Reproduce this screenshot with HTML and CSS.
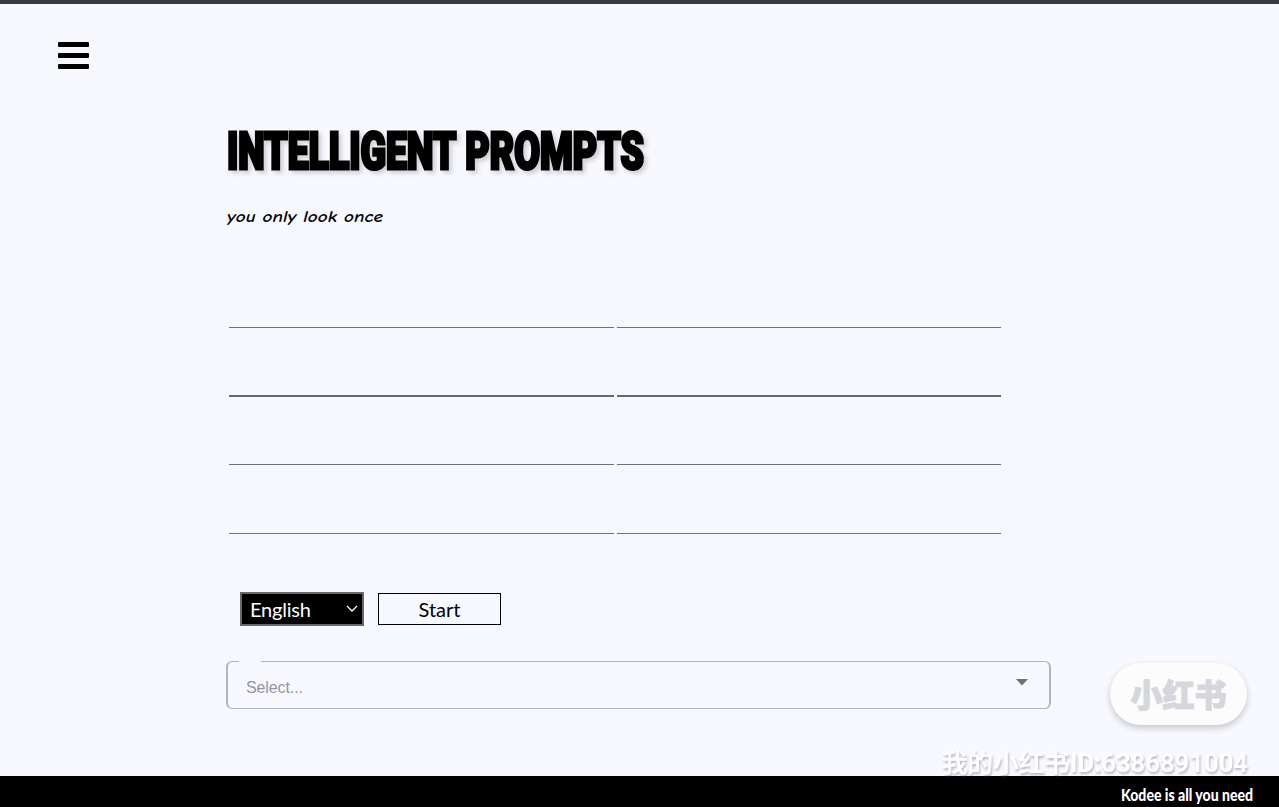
FILE: index.html
```html
<!DOCTYPE html>
<html lang="en">
<head>
<meta charset="utf-8">
<title>Intelligent Prompts</title>
<link rel="stylesheet" href="styles.css">
</head>
<body>
<div class="page">
  <header class="topbar">
    <button class="menu" aria-label="Menu"><span class="bar"></span><span class="bar"></span><span class="bar"></span></button>
  </header>
  <main class="content">
    <h1 class="title"><svg class="title-art" width="440" height="60"><text class="title-text" x="1" y="44.3" textLength="417" lengthAdjust="spacingAndGlyphs">INTELLIGENT PROMPTS</text></svg></h1>
    <p class="tagline"><svg class="tagline-art" width="170" height="30"><text class="tagline-text" x="1" y="18" textLength="156" lengthAdjust="spacingAndGlyphs">you only look once</text></svg></p>
    <div class="fields">
      <span class="field"></span><span class="field"></span>
      <span class="field strong"></span><span class="field strong"></span>
      <span class="field"></span><span class="field"></span>
      <span class="field"></span><span class="field"></span>
    </div>
    <div class="actions">
      <div class="language"><span>English</span><svg width="12" height="8" viewBox="0 0 12 8"><path d="M1 1l5 5 5-5" fill="none" stroke="#fff" stroke-width="1.3"/></svg></div>
      <button class="start">Start</button>
    </div>
    <div class="combo"><span class="placeholder">Select...</span><svg class="caret" width="12" height="7"><path d="M0 0h12l-6 6.5z" fill="#707176"/></svg><span class="notch"></span></div>
  </main>
  <footer class="footer"><svg width="160" height="31"><text class="footer-text" x="2" y="24.5" textLength="132" lengthAdjust="spacingAndGlyphs">Kodee is all you need</text></svg></footer>
  <div class="badge"><span class="badge-text">小红书</span></div>
  <svg class="account" width="320" height="36"><text class="account-text" x="5" y="26" textLength="306" lengthAdjust="spacingAndGlyphs">我的小红书ID:6386891004</text></svg>
</div>
</body>
</html>
```
FILE: styles.css
```css
* { box-sizing: border-box; }
body { margin: 0; background: #f8f9fe; overflow: hidden; }
svg { display: block; }
.page { position: relative; height: 807px; display: flex; flex-direction: column; border-top: 4px solid #3a3a41; overflow: hidden; }
.topbar { height: 121px; padding: 38px 58px 0; }
.menu { display: flex; flex-direction: column; gap: 6px; width: 31px; padding: 0; border: 0; background: none; }
.bar { height: 5px; border-radius: 1px; background: #000; }
.content { flex: 1; padding-left: 226px; }
.title { margin: 0; height: 60px; }
.title-art { overflow: visible; filter: drop-shadow(3px 3px 2px rgba(0,0,0,.16)); }
.title-text { font: 900 51px Roboto, sans-serif; fill: #000; stroke: #000; stroke-width: 3.2px; word-spacing: 1px; }
.tagline { margin: 19px 0 0; height: 30px; }
.tagline-art { overflow: visible; }
.tagline-text { font: italic 600 15.5px "Comic Neue", Lato, sans-serif; fill: #050507; }
.fields { display: grid; grid-template-columns: 385px 384px; grid-auto-rows: 68.7px; column-gap: 3px; padding-left: 3px; height: 300px; margin-top: 25px; }
.field { border-bottom: 1px solid #72737a; }
.field.strong { margin-bottom: -1px; border-bottom-width: 2px; border-color: #68696e; }
.actions { display: flex; align-items: center; gap: 14px; margin: 33px 0 0 14px; height: 34px; font: 20px Lato, sans-serif; }
.language { display: flex; align-items: center; justify-content: space-between; width: 124px; height: 34px; padding: 0 4px 0 8px; border: 2px solid #67686c; background: #000; color: #fff; letter-spacing: -.2px; }
.start { width: 123px; height: 32px; padding: 0; border: 1.5px solid #000; background: transparent; font: 20px Lato, sans-serif; color: #000; }
.combo { position: relative; display: flex; align-items: center; justify-content: space-between; width: 825px; height: 48px; margin-top: 35px; padding: 6px 21px 0 18px; border: 1px solid #b4b5ba; border-left-width: 2px; border-right-width: 2px; border-radius: 6px; }
.placeholder { font: 16px "Liberation Sans", Arial, sans-serif; letter-spacing: -.1px; color: #96979c; }
.caret { margin-top: -12px; }
.notch { position: absolute; left: 11px; top: -1px; width: 22px; height: 1px; background: #f8f9fe; }
.footer { height: 31px; display: flex; justify-content: flex-end; background: #000; }
.footer-text { font: 900 16px Lato, sans-serif; fill: #fff; }
.badge { position: absolute; left: 1110px; top: 659px; width: 137px; height: 62px; border-radius: 31px; background: #fcfcfd; box-shadow: 0 3px 6px rgba(80,80,100,.3); display: flex; align-items: center; justify-content: center; }
.badge-text { font: 900 32px/60px "Noto Sans CJK SC", sans-serif; color: #d6d7dc; -webkit-text-stroke: 1px #d6d7dc; transform: translateY(-1px); }
.account { position: absolute; left: 937px; top: 742px; filter: drop-shadow(1px 2px 1px rgba(70,70,90,.35)); }
.account-text { font: 700 25px Roboto, "Noto Sans CJK SC", sans-serif; fill: #fff; }
```
